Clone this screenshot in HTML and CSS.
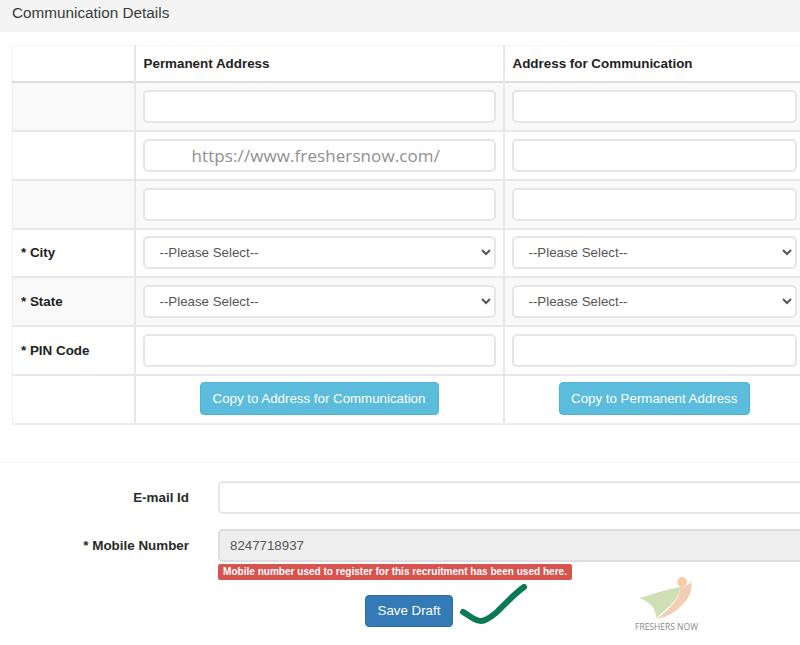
FILE: index.html
```html
<!DOCTYPE html>
<html lang="en">
<head>
<meta charset="utf-8">
<title>Communication Details</title>
<link rel="stylesheet" href="styles.css">
</head>
<body>
<div class="page">
  <h2 class="band">Communication Details</h2>
  <table class="addr">
    <colgroup><col class="c-label"><col class="c-perm"><col class="c-comm"></colgroup>
    <thead>
      <tr class="head"><th></th><th>Permanent Address</th><th>Address for Communication</th></tr>
    </thead>
    <tbody>
      <tr class="alt"><th></th><td><input class="field"></td><td><input class="field"></td></tr>
      <tr><th></th><td class="mark-cell"><input class="field"><span class="mark">https://www.freshersnow.com/</span></td><td><input class="field"></td></tr>
      <tr class="alt"><th></th><td><input class="field"></td><td><input class="field"></td></tr>
      <tr class="short"><th>* City</th><td><select class="field pick"><option>--Please Select--</option></select></td><td><select class="field pick"><option>--Please Select--</option></select></td></tr>
      <tr class="alt"><th>* State</th><td><select class="field pick"><option>--Please Select--</option></select></td><td><select class="field pick"><option>--Please Select--</option></select></td></tr>
      <tr><th>* PIN Code</th><td><input class="field"></td><td><input class="field"></td></tr>
      <tr class="copy"><th></th><td><button class="btn info wide">Copy to Address for Communication</button></td><td><button class="btn info">Copy to Permanent Address</button></td></tr>
    </tbody>
  </table>
  <div class="rule"></div>
  <div class="form">
    <div class="line"><label class="lab">E-mail Id</label><input class="field"></div>
    <div class="line mobile"><label class="lab">* Mobile Number</label><input class="field locked" value="8247718937" readonly></div>
    <div class="msg-row"><span class="msg">Mobile number used to register for this recruitment has been used here.</span></div>
  </div>
  <div class="actions">
    <button class="btn save">Save Draft</button>
    <svg class="tick" width="72" height="42" viewBox="0 0 72 42" aria-hidden="true"><path d="M4 28 C10 31 15 37 22 37 C28 37 33 32 38 28 C46 20 54 11 65 3" fill="none" stroke="#0a7a52" stroke-width="6" stroke-linecap="round" stroke-linejoin="round"/></svg>
    <div class="logo">
      <svg width="60" height="46" viewBox="0 0 60 46" aria-hidden="true">
        <circle cx="46" cy="6" r="5" fill="#f5cfa8"/>
        <path d="M55 5 C58 16 50 28 38 36 C32 40 26 42 20 43 C28 38 36 30 40 24 C44 18 44 14 44 11 C48 11 53 9 55 5Z" fill="#f2cfb4"/>
        <path d="M3 22 C14 19 28 14 44 11 C44 18 40 24 34 30 C28 35 24 38 20 42 C20 32 14 26 3 22Z" fill="#cfdfb6"/>
      </svg>
      <span class="logo-text">FRESHERS NOW</span>
    </div>
  </div>
</div>
</body>
</html>
```
FILE: styles.css
```css
html, body { margin: 0; padding: 0; background: #fff; }
body { font-family: "Liberation Sans", Arial, sans-serif; font-size: 13.4px; color: #333; width: 800px; height: 645px; overflow: hidden; }
.page { width: 800px; overflow: hidden; }
.band { margin: 0; height: 32px; padding: 4px 12px 0; box-sizing: border-box; background: #f4f4f4; font-size: 15.3px; font-weight: 400; line-height: 17px; color: #3a3a3a; }

.addr { margin: 13px 0 0 12px; width: 792px; table-layout: fixed; border-collapse: collapse; }
.c-label { width: 122px; }
.c-perm { width: 369px; }
.addr th, .addr td { padding: 7px; vertical-align: middle; text-align: left; border-top: 2px solid #e8e8e8; border-left: 2px solid #e8e8e8; font-weight: 700; color: #222; box-sizing: border-box; height: 49px; }
.addr th:first-child { padding-left: 8px; border-left: 1px solid #f2f2f2; }
.addr .head th { height: 36px; padding-left: 8px; border-top: 1px solid #f4f4f4; }
.addr tbody tr:first-child th, .addr tbody tr:first-child td { border-top-color: #dcdcdc; }
.addr .short th, .addr .short td { height: 48px; padding-top: 6px; padding-bottom: 6px; }
.alt th, .alt td { background: #f9f9f9; }
.addr .copy td, .addr .copy th { padding-top: 6px; padding-bottom: 8px; border-bottom: 2px solid #ededed; }
.addr td.mark-cell { position: relative; }
.mark { position: absolute; left: 56px; top: 12px; font-family: "Open Sans", sans-serif; font-weight: 400; font-size: 17px; line-height: 24px; letter-spacing: .09px; color: #8f8f8f; }

.field { display: block; width: 100%; height: 33px; box-sizing: border-box; padding: 5px 11px; border: 2px solid #e6e6e6; border-radius: 5px; background: #fff; font-family: "Liberation Sans", Arial, sans-serif; font-size: 13.3px; color: #555; outline: 0; }
.pick { padding-left: 11px; }
.locked { padding-left: 10px; background: #eee; border-color: #dedede; }

.btn { border: 1px solid transparent; border-radius: 4px; font-family: "Liberation Sans", Arial, sans-serif; font-size: 13.3px; color: #fff; padding: 0; cursor: pointer; }
.info { display: block; margin: 0 auto; width: 191px; height: 33px; background: #5bbcdc; border-color: #50b3d4; }
.info.wide { width: 239px; }
.save { width: 88px; height: 32px; background: #337ab7; border-color: #2e6da4; }

.rule { margin-top: 37px; height: 1px; background: #f1f1f1; }
.form { margin-top: 18px; width: 840px; }
.line { display: flex; align-items: center; }
.mobile { margin-top: 15px; }
.lab { width: 189px; margin-right: 29px; flex: none; text-align: right; font-weight: 700; color: #2a2a2a; }
.msg-row { margin: 2px 0 0 218px; height: 16px; }
.msg { display: block; height: 16px; width: 354px; box-sizing: border-box; background: #d9534f; border-radius: 2px; color: #fff; font-size: 10.05px; font-weight: 700; line-height: 16px; text-align: center; white-space: nowrap; }

.actions { display: flex; align-items: flex-start; margin: 15px 0 0 365px; }
.tick { margin: -11px 0 0 6px; flex: none; }
.logo { display: flex; flex-direction: column; align-items: center; margin: -19px 0 0 104px; }
.logo-text { margin-top: -1px; font-family: "Open Sans", sans-serif; font-size: 8.5px; line-height: 11px; color: #8a8a8a; white-space: nowrap; }
```
